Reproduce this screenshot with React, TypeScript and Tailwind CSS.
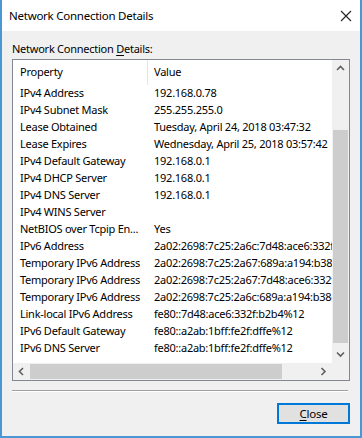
import React from "react";

const rows: [string, string][] = [
  ["IPv4 Address", "192.168.0.78"],
  ["IPv4 Subnet Mask", "255.255.255.0"],
  ["Lease Obtained", "Tuesday, April 24, 2018 03:47:32"],
  ["Lease Expires", "Wednesday, April 25, 2018 03:57:42"],
  ["IPv4 Default Gateway", "192.168.0.1"],
  ["IPv4 DHCP Server", "192.168.0.1"],
  ["IPv4 DNS Server", "192.168.0.1"],
  ["IPv4 WINS Server", ""],
  ["NetBIOS over Tcpip En...", "Yes"],
  ["IPv6 Address", "2a02:2698:7c25:2a6c:7d48:ace6:332f:b2b4"],
  ["Temporary IPv6 Address", "2a02:2698:7c25:2a67:689a:a194:b38c:1c2d"],
  ["Temporary IPv6 Address", "2a02:2698:7c25:2a67:7d48:ace6:332f:b2b4"],
  ["Temporary IPv6 Address", "2a02:2698:7c25:2a6c:689a:a194:b38c:1c2d"],
  ["Link-local IPv6 Address", "fe80::7d48:ace6:332f:b2b4%12"],
  ["IPv6 Default Gateway", "fe80::a2ab:1bff:fe2f:dffe%12"],
  ["IPv6 DNS Server", "fe80::a2ab:1bff:fe2f:dffe%12"],
];

const Chevron = ({ dir }: { dir: "up" | "down" | "left" | "right" }) => {
  const d =
    dir === "up"
      ? "M1 5 L4.5 1.5 L8 5"
      : dir === "down"
      ? "M1 1.5 L4.5 5 L8 1.5"
      : dir === "left"
      ? "M5 1 L1.5 4.5 L5 8"
      : "M1.5 1 L5 4.5 L1.5 8";
  const w = dir === "up" || dir === "down" ? 9 : 7;
  const h = dir === "up" || dir === "down" ? 7 : 9;
  return (
    <svg width={w} height={h} viewBox={`0 0 ${w} ${h}`}>
      <path d={d} fill="none" stroke="#606060" strokeWidth="1.6" />
    </svg>
  );
};

export default function App() {
  return (
    <div
      className="w-[362px] h-[438px] bg-[#f0f0f0] border-x-2 border-b-2 border-[#4a97d6] flex flex-col text-[11px] tracking-[-0.25px] text-black overflow-hidden"
      style={{ fontFamily: '"Noto Sans", "Segoe UI", sans-serif' }}
    >
      <div className="h-[31px] bg-white flex items-center justify-between pl-[7px] pr-[8px] shrink-0">
        <span className="text-[11.5px] leading-none">Network Connection Details</span>
        <svg width="12" height="12" viewBox="0 0 12 12">
          <path d="M1 1 L11 11 M11 1 L1 11" stroke="#222" strokeWidth="1.1" fill="none" />
        </svg>
      </div>
      <div className="flex flex-col px-[10px]">
        <div className="h-[28px] flex items-center leading-none pt-[6px] whitespace-pre">
          Network Connection <span className="underline underline-offset-2">D</span>etails:
        </div>
        <div className="h-[322px] border border-[#828790] bg-white flex flex-col">
          <div className="flex h-[303px]">
            <div className="w-[320px] overflow-hidden flex flex-col">
              <div className="h-[25px] flex items-stretch shrink-0">
                <div className="w-[134px] pl-[7px] flex items-center">Property</div>
                <div className="w-px bg-[#e5e5e5]"></div>
                <div className="pl-[6px] flex items-center">Value</div>
              </div>
              {rows.map(([p, v], i) => (
                <div key={i} className="h-[17px] flex items-center whitespace-nowrap shrink-0">
                  <div className="w-[135px] pl-[7px] shrink-0 overflow-hidden">{p}</div>
                  <div className="pl-[6px] shrink-0">{v}</div>
                </div>
              ))}
            </div>
            <div className="w-[17px] bg-[#f0f0f0] flex flex-col items-center">
              <div className="h-[17px] flex items-center justify-center">
                <Chevron dir="up" />
              </div>
              <div className="flex-1 w-full flex flex-col px-[1px]">
                <div className="h-[53px]"></div>
                <div className="flex-1 bg-[#cdcdcd]"></div>
                <div className="h-[3px]"></div>
              </div>
              <div className="h-[17px] flex items-center justify-center">
                <Chevron dir="down" />
              </div>
            </div>
          </div>
          <div className="flex h-[17px]">
            <div className="w-[320px] bg-[#f0f0f0] flex items-center">
              <div className="w-[17px] flex items-center justify-center">
                <Chevron dir="left" />
              </div>
              <div className="w-[252px] h-[15px] bg-[#cdcdcd]"></div>
              <div className="flex-1"></div>
              <div className="w-[17px] flex items-center justify-center">
                <Chevron dir="right" />
              </div>
            </div>
            <div className="w-[17px] bg-[#f0f0f0]"></div>
          </div>
        </div>
        <div className="mt-[9px] h-px bg-[#a0a0a0] mr-[2px]"></div>
        <div className="h-px bg-white mr-[2px]"></div>
        <div className="flex justify-end mt-[11px]">
          <button className="w-[73px] h-[21px] border-2 border-[#0078d7] bg-[#e1e1e1] flex items-center justify-center leading-none text-[11.5px] whitespace-pre">
            <span className="underline underline-offset-2">C</span>lose
          </button>
        </div>
      </div>
    </div>
  );
}
